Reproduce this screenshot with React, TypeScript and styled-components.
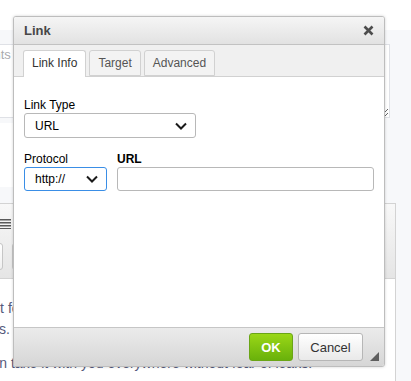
import React from 'react';
import styled, { createGlobalStyle } from 'styled-components';

const GlobalStyle = createGlobalStyle`
  html, body {
    margin: 0;
    padding: 0;
  }
  body {
    font-family: 'Liberation Sans', Arial, sans-serif;
    background: #fff;
  }
`;

const Page = styled.div`
  position: relative;
  width: 411px;
  height: 381px;
  overflow: hidden;
  background: #fff;
`;

const TopStrip = styled.div`
  height: 30px;
  background: #fff;
`;

const Workspace = styled.div`
  height: 351px;
  box-sizing: border-box;
  padding-top: 14px;
  background: #f7f8fa;
  display: flex;
  flex-direction: column;
`;

const CommentField = styled.textarea`
  display: block;
  flex: none;
  margin-left: -61px;
  width: 451px;
  height: 74px;
  box-sizing: border-box;
  border: 1px solid #dfe1e6;
  border-radius: 0;
  background: #fff;
  padding: 2px 8px;
  font: 13px 'Liberation Sans', Arial, sans-serif;
  resize: vertical;
  outline: none;
  &::placeholder {
    color: #a8aaae;
  }
`;

const FormBand = styled.div`
  flex: none;
  margin-top: 5px;
  width: 385px;
  height: 64px;
  background: #fff;
`;

const Editor = styled.div`
  flex: 1;
  margin-top: 16px;
  margin-left: -100px;
  width: 496px;
  box-sizing: border-box;
  border: 1px solid #d3d3d3;
  border-bottom: none;
  display: flex;
  flex-direction: column;
  background: #fff;
`;

const Toolbar = styled.div`
  flex: none;
  height: 75px;
  box-sizing: border-box;
  padding: 15px 0 8px 0;
  border-bottom: 1px solid #d3d3d3;
  background: linear-gradient(#f8f8f8, #e5e5e5);
  display: flex;
  flex-direction: column;
  gap: 14px;
`;

const ToolRow = styled.div<{ $indent: number }>`
  display: flex;
  align-items: center;
  gap: 9px;
  padding-left: ${(p) => p.$indent}px;
`;

const ToolButton = styled.div`
  width: 30px;
  height: 27px;
  box-sizing: border-box;
  border: 1px solid #c6c6c6;
  border-radius: 3px;
  background: linear-gradient(#fff, #f0f0f0);
`;

const EditorContent = styled.div`
  padding: 19px 10px 0 10px;
  font-size: 14px;
  line-height: 21px;
  color: #555a7c;
`;

const Para = styled.p`
  margin: 0 0 13px 0;
  white-space: nowrap;
`;

const Lead = styled.span<{ $w: number }>`
  display: inline-block;
  width: ${(p) => p.$w}px;
  text-align: right;
`;

/* ---------- dialog ---------- */

const Dialog = styled.div`
  position: absolute;
  left: 13px;
  top: 16px;
  width: 372px;
  height: 351px;
  box-sizing: border-box;
  border: 1px solid #bdbdbd;
  border-radius: 3px;
  box-shadow: 0 0 3px rgba(0, 0, 0, 0.18);
  background: #fff;
  display: flex;
  flex-direction: column;
  overflow: hidden;
`;

const TitleBar = styled.div`
  flex: none;
  height: 28px;
  box-sizing: border-box;
  padding: 0 10px;
  border-bottom: 1px solid #c2c2c2;
  background: linear-gradient(#f5f5f5, #e2e2e2);
  display: flex;
  align-items: center;
  justify-content: space-between;
`;

const Title = styled.span`
  font-size: 13px;
  font-weight: bold;
  color: #474747;
`;

const CloseButton = styled.span`
  display: flex;
  width: 11px;
  height: 11px;
  cursor: pointer;
`;

const TabStrip = styled.div`
  flex: none;
  height: 32px;
  box-sizing: border-box;
  padding: 5px 0 0 9px;
  border-bottom: 1px solid #d1d1d1;
  background: #f0f0f0;
  display: flex;
  align-items: flex-start;
  gap: 3px;
`;

const Tab = styled.div<{ $active?: boolean }>`
  height: ${(p) => (p.$active ? 27 : 26)}px;
  box-sizing: border-box;
  padding: 0 8px;
  border: 1px solid #d1d1d1;
  border-bottom: ${(p) => (p.$active ? 'none' : '1px solid #d1d1d1')};
  border-radius: 3px 3px 0 0;
  background: ${(p) => (p.$active ? '#fff' : '#f3f3f3')};
  font-size: 12px;
  line-height: 25px;
  color: ${(p) => (p.$active ? '#333' : '#555')};
  position: relative;
  z-index: ${(p) => (p.$active ? 1 : 0)};
`;

const Body = styled.div`
  flex: 1;
  padding: 21px 10px 0 10px;
  background: #fff;
  display: flex;
  flex-direction: column;
`;

const Label = styled.label<{ $required?: boolean }>`
  display: block;
  font-size: 12px;
  line-height: 14px;
  color: #000;
  font-weight: ${(p) => (p.$required ? 'bold' : 'normal')};
`;

const Field = styled.div<{ $w?: number; $h: number; $focus?: boolean }>`
  width: ${(p) => (p.$w ? `${p.$w}px` : '100%')};
  height: ${(p) => p.$h}px;
  box-sizing: border-box;
  margin-top: 1px;
  padding: 0 8px 0 10px;
  border: 1px solid ${(p) => (p.$focus ? '#3a8ee6' : '#b8b8b8')};
  border-radius: 3px;
  background: #fff;
  display: flex;
  align-items: center;
  justify-content: space-between;
  font-size: 12px;
  color: #000;
`;

const FieldRow = styled.div`
  margin-top: 14px;
  display: flex;
  gap: 10px;
`;

const FieldGroup = styled.div<{ $grow?: boolean }>`
  display: flex;
  flex-direction: column;
  flex: ${(p) => (p.$grow ? 1 : 'none')};
`;

const Footer = styled.div`
  flex: none;
  height: 39px;
  box-sizing: border-box;
  padding: 5px 5px 0 0;
  border-top: 1px solid #c6c6c6;
  background: linear-gradient(#ebebeb, #d6d6d6);
  display: flex;
  justify-content: flex-end;
  align-items: flex-start;
`;

const Button = styled.button<{ $primary?: boolean }>`
  height: 28px;
  box-sizing: border-box;
  margin-left: 5px;
  padding: 0;
  border-radius: 3px;
  font-family: 'Liberation Sans', Arial, sans-serif;
  font-size: 13px;
  cursor: pointer;
  border: 1px solid ${(p) => (p.$primary ? '#6aa516' : '#b6b6b6')};
  background: ${(p) =>
    p.$primary ? 'linear-gradient(#9ad717, #69b10b)' : 'linear-gradient(#fff, #e9e9e9)'};
  color: ${(p) => (p.$primary ? '#fff' : '#333')};
  font-weight: ${(p) => (p.$primary ? 'bold' : 'normal')};
`;

const Grip = styled.span`
  align-self: flex-end;
  margin: 0 0 5px 7px;
  width: 9px;
  height: 9px;
  display: flex;
`;

function Chevron() {
  return (
    <svg width="12" height="8" viewBox="0 0 12 8">
      <polyline points="1,1.5 6,6.5 11,1.5" fill="none" stroke="#1a1a1a" strokeWidth="2" />
    </svg>
  );
}

function JustifyIcon() {
  return (
    <svg width="11" height="10" viewBox="0 0 11 10">
      {[0, 3, 6, 9].map((y) => (
        <rect key={y} x="0" y={y} width="11" height="1.5" fill="#5a5a5a" />
      ))}
    </svg>
  );
}

export default function App() {
  return (
    <Page>
      <GlobalStyle />
      <TopStrip />
      <Workspace>
        <CommentField placeholder="Comments" />
        <FormBand />
        <Editor>
          <Toolbar>
            <ToolRow $indent={99}>
              <JustifyIcon />
            </ToolRow>
            <ToolRow $indent={72}>
              <ToolButton />
              <ToolButton />
            </ToolRow>
          </Toolbar>
          <EditorContent>
            <Para>
              <Lead $w={93}>is perfect</Lead> for keeping all your private notes and
              <br />
              <Lead $w={99}>your ideas.</Lead>
            </Para>
            <Para>
              <Lead $w={96}>You can</Lead> take it with you everywhere without fear of leaks.
            </Para>
          </EditorContent>
        </Editor>
      </Workspace>

      <Dialog>
        <TitleBar>
          <Title>Link</Title>
          <CloseButton>
            <svg width="11" height="11" viewBox="0 0 11 11">
              <path d="M1.5 1.5 L9.5 9.5 M9.5 1.5 L1.5 9.5" stroke="#4d4d4d" strokeWidth="2.6" />
            </svg>
          </CloseButton>
        </TitleBar>
        <TabStrip>
          <Tab $active>Link Info</Tab>
          <Tab>Target</Tab>
          <Tab>Advanced</Tab>
        </TabStrip>
        <Body>
          <Label>Link Type</Label>
          <Field $w={172} $h={25}>
            URL
            <Chevron />
          </Field>
          <FieldRow>
            <FieldGroup>
              <Label>Protocol</Label>
              <Field $w={83} $h={24} $focus>
                http://
                <Chevron />
              </Field>
            </FieldGroup>
            <FieldGroup $grow>
              <Label $required>URL</Label>
              <Field $h={24} />
            </FieldGroup>
          </FieldRow>
        </Body>
        <Footer>
          <Button $primary style={{ width: 44 }}>OK</Button>
          <Button style={{ width: 65 }}>Cancel</Button>
          <Grip>
            <svg width="9" height="9" viewBox="0 0 9 9">
              <polygon points="9,0 9,9 0,9" fill="#5e5e5e" />
            </svg>
          </Grip>
        </Footer>
      </Dialog>
    </Page>
  );
}
